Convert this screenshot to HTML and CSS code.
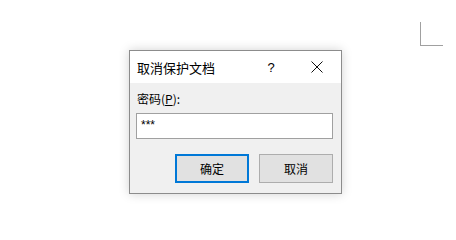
FILE: index.html
```html
<!DOCTYPE html>
<html>
<head>
<meta charset="utf-8">
<link rel="stylesheet" href="styles.css">
</head>
<body>
<div class="page">
  <div class="corner"></div>
  <div class="dialog">
    <div class="titlebar">
      <span class="title">取消保护文档</span>
      <span class="help">?</span>
      <span class="close">
        <svg width="12" height="12" viewBox="0 0 12 12"><path d="M0.5 0.5 L11.5 11.5 M11.5 0.5 L0.5 11.5" stroke="#111" stroke-width="1" fill="none"/></svg>
      </span>
    </div>
    <div class="body">
      <div class="label">密码(<u>P</u>):</div>
      <div class="input">***</div>
      <div class="buttons">
        <div class="btn btn-default">确定</div>
        <div class="btn">取消</div>
      </div>
    </div>
  </div>
</div>
</body>
</html>
```
FILE: styles.css
```css
* { box-sizing: border-box; }
html, body { margin: 0; padding: 0; background: #fff; }
body { font-family: "Noto Sans CJK SC", "Noto Sans", sans-serif; color: #000; }
.page { position: relative; width: 456px; height: 240px; overflow: hidden; }
.corner {
  position: absolute; left: 420px; top: 22px; width: 23px; height: 24px;
  border-left: 1px solid #a0a0a0; border-bottom: 1px solid #a0a0a0;
}
.dialog {
  position: absolute; left: 129px; top: 50px; width: 213px; height: 144px;
  border: 1px solid #8c8c8c; background: #f0f0f0;
  box-shadow: 0 0 10px rgba(0,0,0,0.18);
  display: flex; flex-direction: column;
}
.titlebar {
  height: 32px; background: #fff; display: flex; align-items: center;
  padding-left: 7px; font-size: 13px;
}
.title { flex: 1; }
.help { width: 12px; margin-right: 34px; font-size: 13px; text-align: center; font-family: "Liberation Sans", sans-serif; }
.close { width: 12px; margin-right: 18px; display: flex; }
.body { flex: 1; padding: 8px 8px 0 6px; }
.label { font-size: 12px; line-height: 16px; padding-left: 1px; }
.input {
  margin-top: 6px; height: 26px; background: #fff; border: 1px solid #a0a0a0;
  font-size: 12px; line-height: 22px; padding-left: 4px; font-family: "Liberation Sans", sans-serif;
}
.buttons { display: flex; justify-content: flex-end; gap: 10px; margin-top: 15px; }
.btn {
  width: 74px; height: 29px; background: #e1e1e1; border: 1px solid #adadad;
  font-size: 12px; display: flex; align-items: center; justify-content: center;
}
.btn-default { border: 2px solid #0078d7; }
```
